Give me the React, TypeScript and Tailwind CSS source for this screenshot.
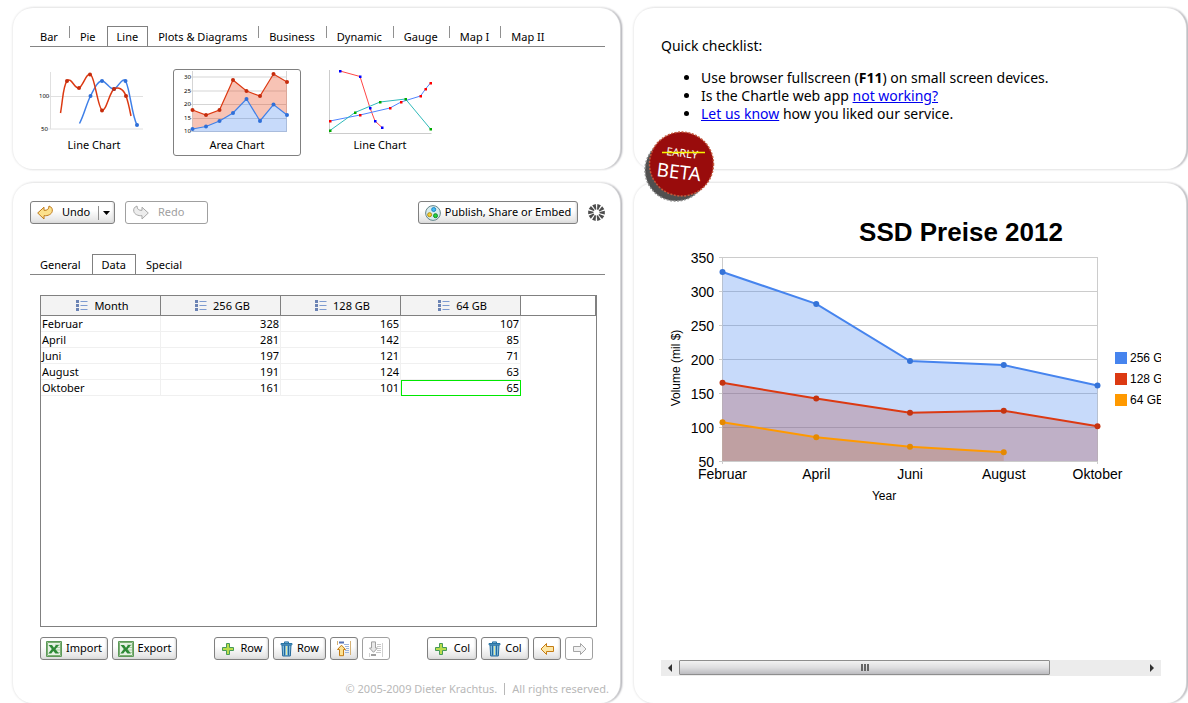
import React from 'react';
import clsx from 'clsx';

const chartTabs = ['Bar', 'Pie', 'Line', 'Plots & Diagrams', 'Business', 'Dynamic', 'Gauge', 'Map I', 'Map II'];
const editorTabs = ['General', 'Data', 'Special'];

const columns = ['256 GB', '128 GB', '64 GB'];
const rows = [
  { month: 'Februar', values: [328, 165, 107] },
  { month: 'April', values: [281, 142, 85] },
  { month: 'Juni', values: [197, 121, 71] },
  { month: 'August', values: [191, 124, 63] },
  { month: 'Oktober', values: [161, 101, 65] },
];

interface PanelProps {
  className?: string;
  children: React.ReactNode;
}

function Panel({ className, children }: PanelProps) {
  return (
    <section
      className={clsx(
        'rounded-[20px] bg-white shadow-[0_0_2px_1px_#ececec,2px_0_2px_0_#94949c]',
        className
      )}
    >
      {children}
    </section>
  );
}

interface TabsProps {
  items: string[];
  active: string;
}

function Tabs({ items, active }: TabsProps) {
  const activeIndex = items.indexOf(active);
  return (
    <div role="tablist" className="flex h-[21px] border-b border-[#858585]">
      {items.map((item, i) => {
        const selected = item === active;
        const divider = !selected && i + 1 !== activeIndex && i < items.length - 1;
        return (
          <div key={item} className="flex items-start">
            <button
              role="tab"
              aria-selected={selected}
              className={clsx(
                'h-5 whitespace-nowrap',
                selected ? 'border-x border-t border-[#808080] px-[9px] leading-5' : 'pr-[11px] pl-[10px] leading-[22px]'
              )}
            >
              {item}
            </button>
            {divider && <span className="h-3 w-px bg-[#909090]" />}
          </div>
        );
      })}
    </div>
  );
}

interface ToolButtonProps {
  label?: string;
  title?: string;
  disabled?: boolean;
  className?: string;
  children: React.ReactNode;
}

function ToolButton({ label, title, disabled, className, children }: ToolButtonProps) {
  return (
    <button
      aria-label={title}
      disabled={disabled}
      className={clsx(
        'flex h-[23px] items-center justify-center gap-1 whitespace-nowrap rounded-[3px] border',
        disabled
          ? 'border-[#a0a0a0] bg-white text-[#a0a0a0]'
          : 'border-[#808080] bg-linear-to-b from-white from-40% to-[#e0e0e0] shadow-[inset_-1px_-1px_2px_#d8d8d8]',
        className
      )}
    >
      {children}
      {label}
    </button>
  );
}

function UndoIcon() {
  return (
    <svg width="16" height="16" viewBox="0 0 16 16">
      <path d="M.7 8 7 2.2v3.1c3 .3 5-1 5-4.3 2.8 1 3.8 3.200 3.200 5.500C14.500 9.300 11 11 7 10.700V14z" fill="#fbe08c" stroke="#bf7a1c" strokeLinejoin="round" />
    </svg>
  );
}

function RedoIcon() {
  return (
    <svg width="16" height="16" viewBox="0 0 16 16">
      <path d="M15.300 8 9 2.200v3.100c-3 .3-5-1-5-4.300C1.200 2 .2 4.200.8 6.500 1.500 9.300 5 11 9 10.700V14z" fill="#ededed" stroke="#a8a8a8" strokeLinejoin="round" />
    </svg>
  );
}

function PublishIcon() {
  return (
    <svg width="16" height="16" viewBox="0 0 16 16">
      <circle cx="8" cy="8" r="7.400" fill="#d6ecee" stroke="#65848a" />
      <circle cx="8.700" cy="4.500" r="2" fill="#45bdf2" stroke="#1c86c8" />
      <circle cx="4.600" cy="9.700" r="2" fill="#f5d332" stroke="#b48a12" />
      <circle cx="10.500" cy="10.700" r="2" fill="#25d53c" stroke="#118a28" />
    </svg>
  );
}

function SpinnerIcon() {
  return (
    <svg width="17" height="17" viewBox="0 0 17 17" role="img" aria-label="Activity">
      {[0, 36, 72, 108, 144, 180, 216, 252, 288, 324].map((angle) => (
        <path key={angle} d="M6.700.2h3.700L9.300 5.500H8.100z" fill="#4c4c4c" transform={`rotate(${angle + 18} 8.500 8.500)`} />
      ))}
    </svg>
  );
}

function ExcelIcon() {
  return (
    <svg width="16" height="16" viewBox="0 0 16 16">
      <path d="M.5.500h15v15H.500z" fill="#fff" stroke="#5c9a58" />
      <path d="M1.500 1.500h13v13h-13z" fill="#e6f2e4" stroke="#7cae74" />
      <path d="M9 4h5M10 6.500h4M10 9h4M9 11.500h5" stroke="#a9cfa2" />
      <path d="M2.500 4H6l2 2.700L10 4h3L9.500 8.300 13 12.500H9.400L7.300 9.900 5.300 12.500H2.300L5.800 8z" fill="#2f8a37" />
    </svg>
  );
}

function PlusIcon() {
  return (
    <svg width="16" height="14" viewBox="0 0 16 14">
      <path d="M5.500 1.500h3v4h4v3h-4v4h-3v-4h-4v-3h4z" fill="#b9dc4c" stroke="#469a58" />
    </svg>
  );
}

function TrashIcon() {
  return (
    <svg width="13" height="16" viewBox="0 0 13 16">
      <path d="M2 4h9l-.7 11H2.700z" fill="#7fbbdc" stroke="#24699b" />
      <path d="M4.500 4.500v10M8.500 4.500v10" stroke="#24699b" />
      <path d="M6.500 5v9" stroke="#e2e9a0" />
      <path d="M1 2.500h11v1.300H1zM4.500 2.300V.900h4v1.400" fill="#85bede" stroke="#2874a5" />
    </svg>
  );
}

function MoveRowUpIcon() {
  return (
    <svg width="16" height="16" viewBox="0 0 16 16">
      <path d="M1.500 0v4M14.500 0v14" stroke="#d5b276" />
      <path d="M3 1.500h5" stroke="#5570b5" strokeWidth="2" />
      <path d="M8 3.500h5M9 5.500h4M10 7.500h3M9 9.500h4M9 11.500h4" stroke="#9db4dc" />
      <path d="M5.500 4.200 9.500 8.500h-2v6.200h-4V8.500h-2z" fill="#fde294" stroke="#c47c14" />
    </svg>
  );
}

function MoveRowDownIcon() {
  return (
    <svg width="16" height="16" viewBox="0 0 16 16">
      <path d="M1.500 12v4M14.500 2v14" stroke="#d0d0d0" />
      <path d="M9 3.500h4M9 5.500h4M10 7.500h3M9 9.500h4M8 11.500h5" stroke="#c8c8c8" />
      <path d="M3 14h5" stroke="#a0a0a0" strokeWidth="2" />
      <path d="M5.500 11.300 1.500 7h2V.900h4V7h2z" fill="#e8e8e8" stroke="#a0a0a0" />
    </svg>
  );
}

function ArrowIcon({ right }: { right?: boolean }) {
  return (
    <svg width="15" height="14" viewBox="0 0 15 14">
      {right ? (
        <path d="M14 7 8.500 1.500v3h-7v5h7v3z" fill="#f2f2f2" stroke="#a5a5a5" strokeLinejoin="round" />
      ) : (
        <path d="M1 7l5.500-5.500v3h7v5h-7v3z" fill="#fde7a5" stroke="#c47c14" strokeLinejoin="round" />
      )}
    </svg>
  );
}

function ListIcon() {
  return (
    <svg width="12" height="12" viewBox="0 0 12 12" className="shrink-0">
      <path d="M0 0h3v3H0zM0 4h3v3H0zM0 8h3v3H0z" fill="#6b83b4" />
      <path d="M4.500 1.500h7M4.500 5.500h7M4.500 9.500h7" stroke="#7d9bd0" />
    </svg>
  );
}

function SmoothLineThumb() {
  const red = [[67, 81], [79, 88], [90, 74.500], [102, 110.500], [114, 89], [126, 96]];
  const blue = [[90.500, 96], [102, 81], [114, 89], [125.500, 81], [137, 125]];
  return (
    <svg width="108" height="64" viewBox="40 70 108 64" className="shrink-0 overflow-visible text-[6px]">
      <path d="M50.500 72v57M48 96.500h95M48 129h95" stroke="#e0e0e0" fill="none" />
      <text x="39" y="98">100</text>
      <text x="41" y="131">50</text>
      <path d="M79.500 123.500C84 115 86 105 90.500 96 95 87 98 81 102 81s8 9 12 8 9-14 12-7c4 8 6 34 11 43" fill="none" stroke="#3f80e8" strokeWidth="1.500" />
      <path d="M60.500 113C63 99 63 86 67 81c4-5 8 9 12 7s8-17 12-13 7 33 11 35 8-19 12-21 9-1 12 7c2 5 3 10 5 20" fill="none" stroke="#dc3912" strokeWidth="1.500" />
      {blue.map(([x, y]) => <circle key={x} cx={x} cy={y} r="2" fill="#2f6fd8" />)}
      {red.map(([x, y]) => <circle key={x} cx={x} cy={y} r="2" fill="#c62c0c" />)}
    </svg>
  );
}

function AreaThumb() {
  const red = [[192.500, 110], [206, 115], [219.500, 110], [233, 80], [246.500, 91], [260, 96], [273.500, 74], [287, 82]];
  const blue = [[192.500, 129], [206, 126.500], [219.500, 121], [233, 113], [246.500, 99], [260, 121], [273.500, 104.500], [287, 115]];
  return (
    <svg width="112" height="64" viewBox="181 70 112 64" className="shrink-0 text-[6px]">
      <path d="M192.500 71v61M286.500 71v61M190 77h97M190 91h97M190 104.500h97M190 118.500h97M190 131.500h97" stroke="#d5d5d5" fill="none" />
      <text x="184" y="79">30</text>
      <text x="184" y="93">25</text>
      <text x="184" y="106">20</text>
      <text x="184" y="120">15</text>
      <text x="184" y="133">10</text>
      <polygon points={`${red.join(' ')} ${[...blue].reverse().join(' ')}`} fill="#e8532c" fillOpacity=".35" />
      <polygon points={`${blue.join(' ')} 287,132 192.500,132`} fill="#4684ee" fillOpacity=".3" />
      <polyline points={red.join(' ')} fill="none" stroke="#dc3912" strokeWidth="1.200" />
      <polyline points={blue.join(' ')} fill="none" stroke="#3f80e8" strokeWidth="1.200" />
      {red.map(([x, y]) => <circle key={x} cx={x} cy={y} r="2" fill="#c62c0c" />)}
      {blue.map(([x, y]) => <circle key={x} cx={x} cy={y} r="2" fill="#2f6fd8" />)}
    </svg>
  );
}

function ScatterThumb() {
  const red = [[340, 71], [360, 76.500], [370, 108], [375, 121], [382, 127.500]];
  const blue = [[330, 121], [360, 115], [390, 108], [401, 102], [420.500, 96], [425.500, 89], [430.500, 83]];
  const green = [[330, 130.500], [355, 112.500], [380, 102], [405.500, 99], [430.500, 129]];
  return (
    <svg width="106" height="64" viewBox="327 70 106 64" className="shrink-0">
      <path d="M329.500 70v63.500h102" fill="none" stroke="#ccc" />
      <polyline points={red.join(' ')} fill="none" stroke="#ff4545" />
      <polyline points={blue.join(' ')} fill="none" stroke="#4f84ff" />
      <polyline points={green.join(' ')} fill="none" stroke="#30baba" />
      {red.map(([x, y]) => <rect key={x} x={x - 1} y={y - 1} width="2.500" height="2.500" fill="#00f" />)}
      {blue.map(([x, y]) => <rect key={x} x={x - 1} y={y - 1} width="2.500" height="2.500" fill="#f00" />)}
      {green.map(([x, y]) => <rect key={x} x={x - 1} y={y - 1} width="2.500" height="2.500" fill="#0a0" />)}
    </svg>
  );
}

function BetaBadge() {
  return (
    <svg width="76" height="76" viewBox="0 0 76 76" className="absolute -bottom-[35px] left-2">
      <circle cx="34" cy="42" r="31" fill="#505050" stroke="#8a8a8a" strokeWidth="1.500" strokeDasharray="2 1.500" />
      <circle cx="39.500" cy="36" r="32" fill="#990c0c" stroke="#c4583c" strokeWidth="1.500" strokeDasharray="2 1.500" />
      <g transform="rotate(7 40 35)" fill="#fff">
        <text x="39" y="29" textAnchor="middle" fontSize="11">EARLY</text>
        <text x="38" y="51" textAnchor="middle" fontSize="19">BETA</text>
      </g>
      <path d="M20 24.500h43" stroke="#f5f500" strokeWidth="1.500" />
    </svg>
  );
}

const series = [
  { name: '256 GB', line: '#4684ee', dot: '#3573d8', data: [328, 281, 197, 191, 161] },
  { name: '128 GB', line: '#dc3912', dot: '#c53310', data: [165, 142, 121, 124, 101] },
  { name: '64 GB', line: '#ff9900', dot: '#e58900', data: [107, 85, 71, 63] },
];

const chartX = (i: number) => 61.5 + i * 93.75;
const chartY = (v: number) => 56 + (350 - v) * 0.68;

function PriceChart() {
  return (
    <svg width="650" height="310" viewBox="0 0 650 310" className="block text-sm">
      <text x="300" y="40" textAnchor="middle" fontSize="26" fontWeight="bold">SSD Preise 2012</text>
      {[350, 300, 250, 200, 150, 100, 50].map((v) => (
        <g key={v}>
          <path d={`M58 ${Math.round(chartY(v)) + 0.5}h378`} stroke="#ccc" />
          <text x="53" y={chartY(v) + 6} textAnchor="end">{v}</text>
        </g>
      ))}
      <path d="M61.500 56v207M436.500 56v207" stroke="#ccc" />
      {/* areas are stacked back to front, the first series lies on top */}
      {[...series].reverse().map((s) => (
        <polygon
          key={s.name}
          points={`${s.data.map((v, i) => `${chartX(i)},${chartY(v)}`).join(' ')} ${chartX(s.data.length - 1)},260 61.500,260`}
          fill={s.line}
          fillOpacity=".3"
        />
      ))}
      {series.map((s) => (
        <g key={s.name}>
          <polyline points={s.data.map((v, i) => `${chartX(i)},${chartY(v)}`).join(' ')} fill="none" stroke={s.line} strokeWidth="2" />
          {s.data.map((v, i) => (
            <circle key={i} cx={chartX(i)} cy={chartY(v)} r="3" fill={s.dot} />
          ))}
        </g>
      ))}
      {rows.map((row, i) => (
        <text key={row.month} x={chartX(i)} y="278" textAnchor="middle">{row.month}</text>
      ))}
      <text x="223" y="299" textAnchor="middle" fontSize="12">Year</text>
      <text x="19" y="167" textAnchor="middle" fontSize="12" transform="rotate(-90 19 167)">Volume (mil $)</text>
      {series.map((s, i) => (
        <g key={s.name}>
          <rect x="454" y={151 + i * 21} width="12" height="12" fill={s.line} />
          <text x="469" y={161 + i * 21} fontSize="12">{s.name}</text>
        </g>
      ))}
    </svg>
  );
}

function ScrollBar() {
  return (
    <div className="flex h-4 items-stretch bg-[#ececec]">
      <button aria-label="Scroll left" className="flex w-[18px] items-center justify-center">
        <svg width="4" height="8" viewBox="0 0 4 8"><path d="M4 0v8L0 4z" fill="#303030" /></svg>
      </button>
      <div className="flex-1">
        <div className="flex h-[15px] w-4/5 items-center justify-center gap-px rounded-[1px] border border-[#8e8e8e] bg-linear-to-b from-[#f2f2f2] via-[#dedee0] to-[#bcbcc0]">
          <span className="h-[7px] w-[2px] bg-[#666]" />
          <span className="h-[7px] w-[2px] bg-[#666]" />
          <span className="h-[7px] w-[2px] bg-[#666]" />
        </div>
      </div>
      <button aria-label="Scroll right" className="flex w-[18px] items-center justify-center">
        <svg width="4" height="8" viewBox="0 0 4 8"><path d="M0 0v8l4-4z" fill="#303030" /></svg>
      </button>
    </div>
  );
}

function ChartPicker() {
  const cards = [
    { label: 'Line Chart', thumb: <SmoothLineThumb /> },
    { label: 'Area Chart', thumb: <AreaThumb />, selected: true },
    { label: 'Line Chart', thumb: <ScatterThumb /> },
  ];
  return (
    <Panel className="pt-[18px] pr-[15px] pb-[13px] pl-[17px]">
      <Tabs items={chartTabs} active="Line" />
      <div className="mt-[22px] flex gap-[15px]">
        {cards.map((card, i) => (
          <button
            key={i}
            className={clsx(
              'flex h-[87px] w-32 flex-col items-center rounded-[3px] border',
              card.selected ? 'border-[#808080]' : 'border-transparent'
            )}
          >
            {card.thumb}
            <span className="leading-[21px]">{card.label}</span>
          </button>
        ))}
      </div>
    </Panel>
  );
}

function DataTable() {
  return (
    <div className="flex-1 border border-[#808080]">
      <table className="w-full table-fixed border-separate border-spacing-0 leading-[15px]">
        <colgroup>
          <col className="w-[120px]" />
          <col className="w-[120px]" />
          <col className="w-[120px]" />
          <col className="w-[120px]" />
          <col />
        </colgroup>
        <thead>
          <tr className="h-5">
            {['Month', ...columns].map((name) => (
              <th key={name} scope="col" className="border-r border-b border-[#808080] bg-[#f3f3f3] p-0 font-normal">
                <span className="flex items-center justify-center gap-[6px] pl-1">
                  <ListIcon />
                  {name}
                </span>
              </th>
            ))}
            <td className="border-r border-b border-[#808080] p-0" />
          </tr>
        </thead>
        <tbody>
          {rows.map((row, r) => (
            <tr key={row.month} className="h-4">
              <td className="border-r border-b border-[#f0f0f0] p-0 pl-px">{row.month}</td>
              {row.values.map((value, c) => (
                <td
                  key={c}
                  className={clsx(
                    'border-r border-b border-[#f0f0f0] p-0 pr-px text-right',
                    r === 4 && c === 2 && 'outline outline-[#00e800] -outline-offset-1'
                  )}
                >
                  {value}
                </td>
              ))}
              <td className="p-0" />
            </tr>
          ))}
        </tbody>
      </table>
    </div>
  );
}

function Editor() {
  return (
    <Panel className="flex flex-1 flex-col pt-[18px] pr-[11px] pb-[6px] pl-[17px]">
      <div className="mr-1 flex items-center">
        <div className="flex h-[23px] items-center rounded-[3px] border border-[#808080] bg-linear-to-b from-white from-40% to-[#e0e0e0] shadow-[inset_-1px_-1px_2px_#d8d8d8]">
          <button className="flex items-center gap-[9px] pr-2 pl-[6px]">
            <UndoIcon />
            Undo
          </button>
          <button aria-label="Undo history" className="flex h-[14px] items-center border-l border-[#909090] px-1">
            <svg width="7" height="4" viewBox="0 0 7 4"><path d="M0 0h7L3.500 4z" fill="#000" /></svg>
          </button>
        </div>
        <ToolButton label="Redo" disabled className="ml-[10px] w-[83px] gap-[9px] pr-4"><RedoIcon /></ToolButton>
        <ToolButton label="Publish, Share or Embed" className="mr-[10px] ml-auto w-40"><PublishIcon /></ToolButton>
        <SpinnerIcon />
      </div>
      <div className="mt-[30px] mr-1">
        <Tabs items={editorTabs} active="Data" />
      </div>
      <div className="mt-5 mr-3 ml-[10px] flex flex-1 flex-col">
        <DataTable />
        <div className="mt-[10px] mr-1 flex gap-1">
          <ToolButton label="Import" className="w-[68px]"><ExcelIcon /></ToolButton>
          <ToolButton label="Export" className="w-[65px]"><ExcelIcon /></ToolButton>
          <ToolButton label="Row" className="mx-auto mr-0 w-[55px]"><PlusIcon /></ToolButton>
          <ToolButton label="Row" className="w-[53px]"><TrashIcon /></ToolButton>
          <ToolButton title="Move row up" className="w-7"><MoveRowUpIcon /></ToolButton>
          <ToolButton title="Move row down" disabled className="w-7"><MoveRowDownIcon /></ToolButton>
          <ToolButton label="Col" className="mx-auto mr-0 w-[50px]"><PlusIcon /></ToolButton>
          <ToolButton label="Col" className="w-12"><TrashIcon /></ToolButton>
          <ToolButton title="Move column left" className="w-7"><ArrowIcon /></ToolButton>
          <ToolButton title="Move column right" disabled className="w-7"><ArrowIcon right /></ToolButton>
        </div>
      </div>
      <footer className="mt-[21px] flex items-center justify-end leading-4 text-[#b8b8b8]">
        <span>© 2005-2009 Dieter Krachtus.</span>
        <span className="mx-[7px] h-3 w-px bg-[#b8b8b8]" />
        <span>All rights reserved.</span>
      </footer>
    </Panel>
  );
}

export default function App() {
  return (
    <div className="grid min-h-screen grid-cols-[minmax(0,607fr)_minmax(0,552fr)] gap-x-[14px] overflow-hidden bg-white pt-2 pr-[2px] pl-[13px] font-['Noto_Sans',sans-serif] text-[11px] text-black">
      <div className="flex flex-col gap-[14px]">
        <ChartPicker />
        <Editor />
      </div>
      <div className="flex flex-col gap-[14px]">
        <Panel className="relative h-[161px] px-[27px] pt-[29px] text-sm leading-[18px]">
          <p>Quick checklist:</p>
          <ul className="mt-[14px] list-disc pl-10">
            <li>Use browser fullscreen (<b>F11</b>) on small screen devices.</li>
            <li>Is the Chartle web app <a href="#" className="text-[#0000ee] underline">not working?</a></li>
            <li><a href="#" className="text-[#0000ee] underline">Let us know</a> how you liked our service.</li>
          </ul>
          <BetaBadge />
        </Panel>
        <Panel className="flex flex-1 flex-col pt-[18px] pr-[25px] pb-[27px] pl-[27px]">
          <div className="flex-1 overflow-hidden font-['Liberation_Sans',sans-serif]">
            <PriceChart />
          </div>
          <ScrollBar />
        </Panel>
      </div>
    </div>
  );
}
